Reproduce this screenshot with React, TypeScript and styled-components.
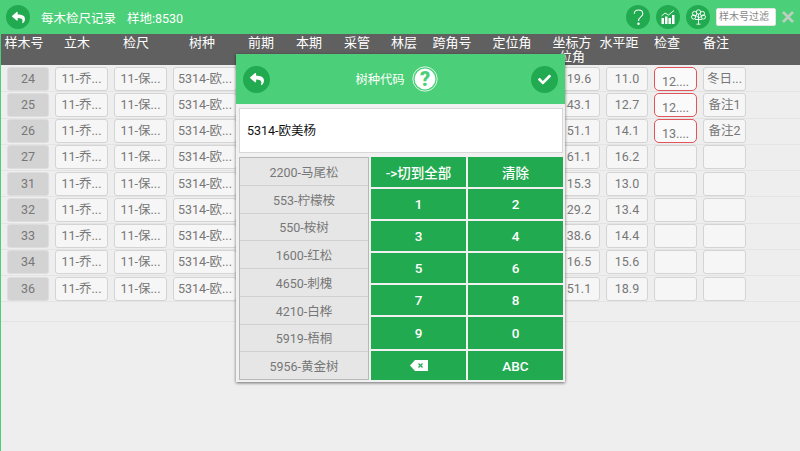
import * as React from "react";
import styled, { createGlobalStyle } from "styled-components";
import { FaCheck, FaReply } from "react-icons/fa";

const FONT = `Roboto, "Noto Sans CJK SC", sans-serif`;
const GREEN = "#4bcf78";
const DARK_GREEN = "#22aa50";

const GlobalStyle = createGlobalStyle`
    html, body {
        margin: 0;
        padding: 0;
        background: #eeeeee;
    }
    * {
        box-sizing: border-box;
    }
`;

const Page = styled.div`
    position: relative;
    width: 800px;
    height: 451px;
    overflow: hidden;
    background: #eeeeee;
    font-family: ${FONT};
    border-left: 1px solid ${GREEN};
`;

const TopBar = styled.div`
    height: 34px;
    margin-left: -1px;
    padding: 0 6px;
    display: flex;
    align-items: center;
    background: ${GREEN};
    color: #fff;
    font-size: 12.5px;
`;

const RoundButton = styled.div<{ $size?: number }>`
    width: ${(p) => p.$size ?? 24}px;
    height: ${(p) => p.$size ?? 24}px;
    flex: none;
    border-radius: 50%;
    background: ${DARK_GREEN};
    color: #fff;
    display: flex;
    align-items: center;
    justify-content: center;
`;

const Title = styled.span`
    margin-left: 11px;
`;

const PlotNo = styled.span`
    margin-left: 11px;
    flex: 1;
`;

const TopIcons = styled.div`
    display: flex;
    align-items: center;
    gap: 6px;
`;

const FilterInput = styled.div`
    width: 60px;
    height: 18px;
    margin-left: 6px;
    background: #fff;
    border: 1px solid #e4e4e4;
    border-radius: 2px;
    color: #888;
    font-size: 10px;
    line-height: 16px;
    padding-left: 2px;
    white-space: nowrap;
`;

const CloseMark = styled.div`
    width: 12px;
    margin-left: 6px;
    color: #bccfc2;
    display: flex;
`;

const HeadRow = styled.div`
    height: 31px;
    display: flex;
    background: #606060;
    color: #fff;
    font-size: 13px;
    line-height: 14px;
    padding-top: 2px;
`;

const HeadCell = styled.div<{ $w: number }>`
    width: ${(p) => p.$w}px;
    flex: none;
    text-align: center;
`;

const Rows = styled.div`
    height: 257px;
    padding-top: 1px;
    border-bottom: 1px solid #e4e4e4;
`;

const Row = styled.div`
    height: 26.25px;
    display: flex;
    align-items: center;
    gap: 6px;
    padding-left: 6px;
    border-bottom: 1px solid #e4e4e4;
`;

const Cell = styled.div<{ $w: number; $kind?: "id" | "alert" }>`
    width: ${(p) => p.$w}px;
    height: 24px;
    flex: none;
    border-radius: ${(p) => (p.$kind === "alert" ? 5 : 3)}px;
    text-align: center;
    font-size: 12.5px;
    line-height: ${(p) => (p.$kind === "alert" ? "27px" : "22px")};
    white-space: nowrap;
    overflow: hidden;
    color: #777;
    background: ${(p) => (p.$kind === "id" ? "#d3d3d3" : p.$kind === "alert" ? "#fafafa" : "#f6f6f6")};
    border: 1px solid ${(p) => (p.$kind === "alert" ? "#e0555a" : p.$kind === "id" ? "#dddddd" : "#d4d4d4")};
`;

const Dialog = styled.div`
    position: absolute;
    left: 235px;
    top: 54px;
    width: 329px;
    height: 328px;
    background: #f1f1f1;
    box-shadow: 0 1px 3px rgba(0, 0, 0, 0.55);
    display: flex;
    flex-direction: column;
`;

const DialogHead = styled.div`
    height: 50px;
    flex: none;
    background: ${GREEN};
    padding: 0 7px;
    display: flex;
    align-items: center;
    color: #fff;
    font-size: 12.3px;
`;

const DialogTitle = styled.div`
    flex: 1;
    display: flex;
    align-items: center;
    justify-content: center;
    gap: 7px;
    padding-right: 8px;
`;

const HelpRing = styled.svg`
    width: 26px;
    height: 26px;
`;

const CodeInput = styled.div`
    height: 45px;
    margin: 4px 2px 4px 3px;
    background: #fff;
    border: 1px solid #d8d8d8;
    color: #111;
    font-size: 12.5px;
    line-height: 44px;
    padding-left: 7px;
`;

const Picker = styled.div`
    flex: 1;
    display: flex;
    gap: 2px;
    padding: 0 2px 2px 3px;
`;

const SpeciesList = styled.div`
    width: 130px;
    border: 1px solid #b8b8b8;
    background: #e6e6e6;
    display: flex;
    flex-direction: column;
`;

const SpeciesItem = styled.div`
    flex: 1;
    display: flex;
    align-items: center;
    justify-content: center;
    color: #777;
    font-size: 12.5px;
    border-bottom: 1px solid #d0d0d0;
    &:last-child {
        border-bottom: none;
    }
`;

const Keys = styled.div`
    flex: 1;
    display: grid;
    grid-template-columns: 95px 95px;
    grid-template-rows: repeat(5, 30px) 32px;
    gap: 2px;
`;

const Key = styled.div`
    background: ${DARK_GREEN};
    color: #fff;
    font-size: 13.5px;
    font-weight: 500;
    display: flex;
    align-items: center;
    justify-content: center;
`;

const samples = [
    { id: "24", az: "19.6", dist: "11.0", check: "12....", note: "冬日..." },
    { id: "25", az: "43.1", dist: "12.7", check: "12....", note: "备注1" },
    { id: "26", az: "51.1", dist: "14.1", check: "13....", note: "备注2" },
    { id: "27", az: "61.1", dist: "16.2", check: "", note: "" },
    { id: "31", az: "15.3", dist: "13.0", check: "", note: "" },
    { id: "32", az: "29.2", dist: "13.4", check: "", note: "" },
    { id: "33", az: "38.6", dist: "14.4", check: "", note: "" },
    { id: "34", az: "16.5", dist: "15.6", check: "", note: "" },
    { id: "36", az: "51.1", dist: "18.9", check: "", note: "" },
];

const headColumns: [string, number][] = [
    ["样木号", 46],
    ["立木", 60],
    ["检尺", 58],
    ["树种", 74],
    ["前期", 44],
    ["本期", 52],
    ["采管", 44],
    ["林层", 50],
    ["跨角号", 46],
    ["定位角", 74],
    ["坐标方位角", 46],
    ["水平距", 48],
    ["检查", 48],
    ["备注", 50],
];

const species = [
    "2200-马尾松",
    "553-柠檬桉",
    "550-桉树",
    "1600-红松",
    "4650-刺槐",
    "4210-白桦",
    "5919-梧桐",
    "5956-黄金树",
];

const keys = ["->切到全部", "清除", "1", "2", "3", "4", "5", "6", "7", "8", "9", "0"];

export default function App() {
    return (
        <Page>
            <GlobalStyle />
            <TopBar>
                <RoundButton>
                    <FaReply size={13} />
                </RoundButton>
                <Title>每木检尺记录</Title>
                <PlotNo>样地:8530</PlotNo>
                <TopIcons>
                    <RoundButton>
                        <svg width="11" height="16" viewBox="0 0 14 20" fill="none" stroke="#fff" strokeWidth="1.3">
                            <path d="M1.5 6C1.5 3 4 1 7 1s5.5 2 5.5 5c0 4-5.5 4-5.5 9" />
                            <circle cx="7" cy="18.5" r="0.9" fill="#fff" />
                        </svg>
                    </RoundButton>
                    <RoundButton>
                        <svg width="14" height="14" viewBox="0 0 14 14" fill="#fff">
                            <rect x="0.5" y="8" width="2.5" height="6" />
                            <rect x="4" y="6.5" width="2.5" height="7.5" />
                            <rect x="7.5" y="8" width="2.5" height="6" />
                            <rect x="11" y="5" width="2.5" height="9" />
                            <path d="M0.5 6l3.5-3 3.5 2 5.5-4.5" fill="none" stroke="#fff" strokeWidth="0.9" />
                        </svg>
                    </RoundButton>
                    <RoundButton>
                        <svg width="15" height="16" viewBox="0 0 15 16" fill="none" stroke="#fff" strokeWidth="0.9">
                            <circle cx="7.5" cy="3" r="2.2" />
                            <circle cx="3.6" cy="4.6" r="2.2" />
                            <circle cx="11.4" cy="4.6" r="2.2" />
                            <circle cx="2.6" cy="8" r="2.1" />
                            <circle cx="12.4" cy="8" r="2.1" />
                            <path d="M4 10.5h7M7.5 5v10M5.5 15.2h4M7.5 9.5L10 7.5M7.5 8.5L5 6.5" />
                        </svg>
                    </RoundButton>
                </TopIcons>
                <FilterInput>样木号过滤</FilterInput>
                <CloseMark>
                    <svg width="12" height="12" viewBox="0 0 12 12" stroke="currentColor" strokeWidth="2.6">
                        <path d="M1 1l10 10M11 1L1 11" />
                    </svg>
                </CloseMark>
            </TopBar>

            <HeadRow>
                {headColumns.map(([label, width]) => (
                    <HeadCell key={label} $w={width}>
                        {label}
                    </HeadCell>
                ))}
            </HeadRow>

            <Rows>
                {samples.map((row) => (
                    <Row key={row.id}>
                        <Cell $w={42} $kind="id">
                            {row.id}
                        </Cell>
                        <Cell $w={53}>11-乔...</Cell>
                        <Cell $w={53}>11-保...</Cell>
                        <Cell $w={64}>5314-欧...</Cell>
                        <Cell $w={42} />
                        <Cell $w={42} />
                        <Cell $w={42} />
                        <Cell $w={42} />
                        <Cell $w={42} />
                        <Cell $w={69} />
                        <Cell $w={42}>{row.az}</Cell>
                        <Cell $w={42}>{row.dist}</Cell>
                        <Cell $w={43} $kind={row.check ? "alert" : undefined}>
                            {row.check}
                        </Cell>
                        <Cell $w={43}>{row.note}</Cell>
                    </Row>
                ))}
            </Rows>

            <Dialog>
                <DialogHead>
                    <RoundButton $size={27}>
                        <FaReply size={14} />
                    </RoundButton>
                    <DialogTitle>
                        树种代码
                        <HelpRing viewBox="0 0 26 26">
                            <circle cx="13" cy="13" r="12.2" fill="none" stroke="#fff" strokeWidth="0.8" />
                            <circle cx="13" cy="13" r="10.4" fill="#fff" />
                            <text x="13" y="20" textAnchor="middle" fontSize="20" fontWeight="900" fill={GREEN} fontFamily="Roboto">
                                ?
                            </text>
                        </HelpRing>
                    </DialogTitle>
                    <RoundButton $size={27}>
                        <FaCheck size={13} />
                    </RoundButton>
                </DialogHead>
                <CodeInput>5314-欧美杨</CodeInput>
                <Picker>
                    <SpeciesList>
                        {species.map((name) => (
                            <SpeciesItem key={name}>{name}</SpeciesItem>
                        ))}
                    </SpeciesList>
                    <Keys>
                        {keys.map((label) => (
                            <Key key={label}>{label}</Key>
                        ))}
                        <Key>
                            <svg width="18" height="11" viewBox="0 0 18 11">
                                <path d="M5 0h13v11H5L0 5.5z" fill="#fff" />
                                <path d="M8.5 3.5l4 4M12.5 3.5l-4 4" stroke={DARK_GREEN} strokeWidth="1.3" />
                            </svg>
                        </Key>
                        <Key>ABC</Key>
                    </Keys>
                </Picker>
            </Dialog>
        </Page>
    );
}
